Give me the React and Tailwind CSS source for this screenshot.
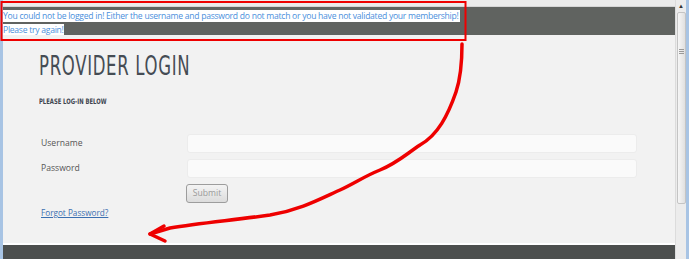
export default function App() {
  return (
    <div className="relative w-[689px] h-[259px] overflow-hidden bg-[#e9e9e9] flex font-['Open_Sans',sans-serif]">
      {/* left window edge */}
      <div className="w-[3px] bg-[#a8c4e4]" />

      {/* page */}
      <div className="w-[672px] flex flex-col">
        <div className="h-[7px] bg-[#ebebeb] border-b border-[#d6d6d6]" />

        {/* error strip */}
        <div className="h-[28px] bg-[#606360] pt-[2px] text-[8.6px] leading-[14px] tracking-[-0.27px] text-[#4a8fdc]">
          <div>
            <span className="bg-white pr-[1px]">
              You could not be logged in! Either the username and password do not match or you have not validated your membership!
            </span>
          </div>
          <div>
            <span className="bg-white">Please try again!</span>
          </div>
        </div>

        {/* content */}
        <div className="h-[208px] bg-[#f2f2f2] pl-[36px] pt-[14px]">
          <h1 className="font-['DejaVu_Sans_Condensed',sans-serif] text-[27px] leading-[34px] tracking-[1px] text-[#454c54] scale-x-[0.68] origin-left">
            PROVIDER LOGIN
          </h1>
          <p className="mt-[14px] font-['DejaVu_Sans_Condensed',sans-serif] font-bold text-[7.5px] leading-[10px] text-[#3f4650] scale-x-[0.78] origin-left">
            PLEASE LOG-IN BELOW
          </p>

          <div className="mt-[27px] pl-[2px] flex flex-col">
            <div className="flex items-center h-[19px]">
              <span className="w-[146px] text-[8.6px] text-[#555]">Username</span>
              <div className="w-[450px] h-[19px] rounded-[3px] bg-[#fafafa] border border-[#ececec]" />
            </div>
            <div className="flex items-center h-[19px] mt-[6px]">
              <span className="w-[146px] text-[8.6px] text-[#555]">Password</span>
              <div className="w-[450px] h-[19px] rounded-[3px] bg-[#fafafa] border border-[#ececec]" />
            </div>
            <div className="flex mt-[6px] pl-[145px]">
              <button className="w-[42px] h-[19px] rounded-[3px] border border-[#9d9d9d] bg-gradient-to-b from-[#f4f4f4] to-[#dcdcdc] text-[8.6px] text-[#9a9a9a] leading-none">
                Submit
              </button>
            </div>
            <a className="mt-[4px] text-[8.2px] text-[#3b6fb0] underline w-fit">
              Forgot Password?
            </a>
          </div>
        </div>

        <div className="h-[2px] bg-white" />
        <div className="flex-1 bg-[#4c4f4e]" />
      </div>

      {/* scrollbar */}
      <div className="w-[11px] bg-[#ececec] flex flex-col items-center border-l border-[#dcdcdc]">
        <div className="h-[12px] text-[6px] leading-[12px] text-[#333]">▲</div>
        <div className="w-[9px] h-[192px] rounded-[2px] border border-[#c4c4c4] bg-gradient-to-r from-[#f6f6f6] to-[#e0e0e0] flex flex-col items-center">
          <div className="mt-[36px] w-[5px] h-[5px] border-y border-[#999] flex items-center">
            <div className="w-full h-px bg-[#999]" />
          </div>
        </div>
      </div>

      {/* right window edge */}
      <div className="flex-1 bg-[#a8c4e4]" />

      {/* red annotation overlay */}
      <svg className="absolute inset-0 pointer-events-none" width="689" height="259" viewBox="0 0 689 259">
        <rect x="1.5" y="2" width="464" height="38" fill="none" stroke="#ee0000" strokeWidth="2" />
        <path
          d="M462 44 C462 62 460 80 456 92 C448 115 438 135 420 145 C405 155 397 163 380 170 C365 176 355 183 340 190 C320 199 300 210 270 215 C235 220 200 223 170 228 L150 234"
          fill="none"
          stroke="#ee0000"
          strokeWidth="3.5"
          strokeLinecap="round"
          strokeLinejoin="round"
        />
        <path
          d="M164 226 L150 234 L165 241"
          fill="none"
          stroke="#ee0000"
          strokeWidth="3.5"
          strokeLinecap="round"
          strokeLinejoin="round"
        />
      </svg>
    </div>
  )
}
